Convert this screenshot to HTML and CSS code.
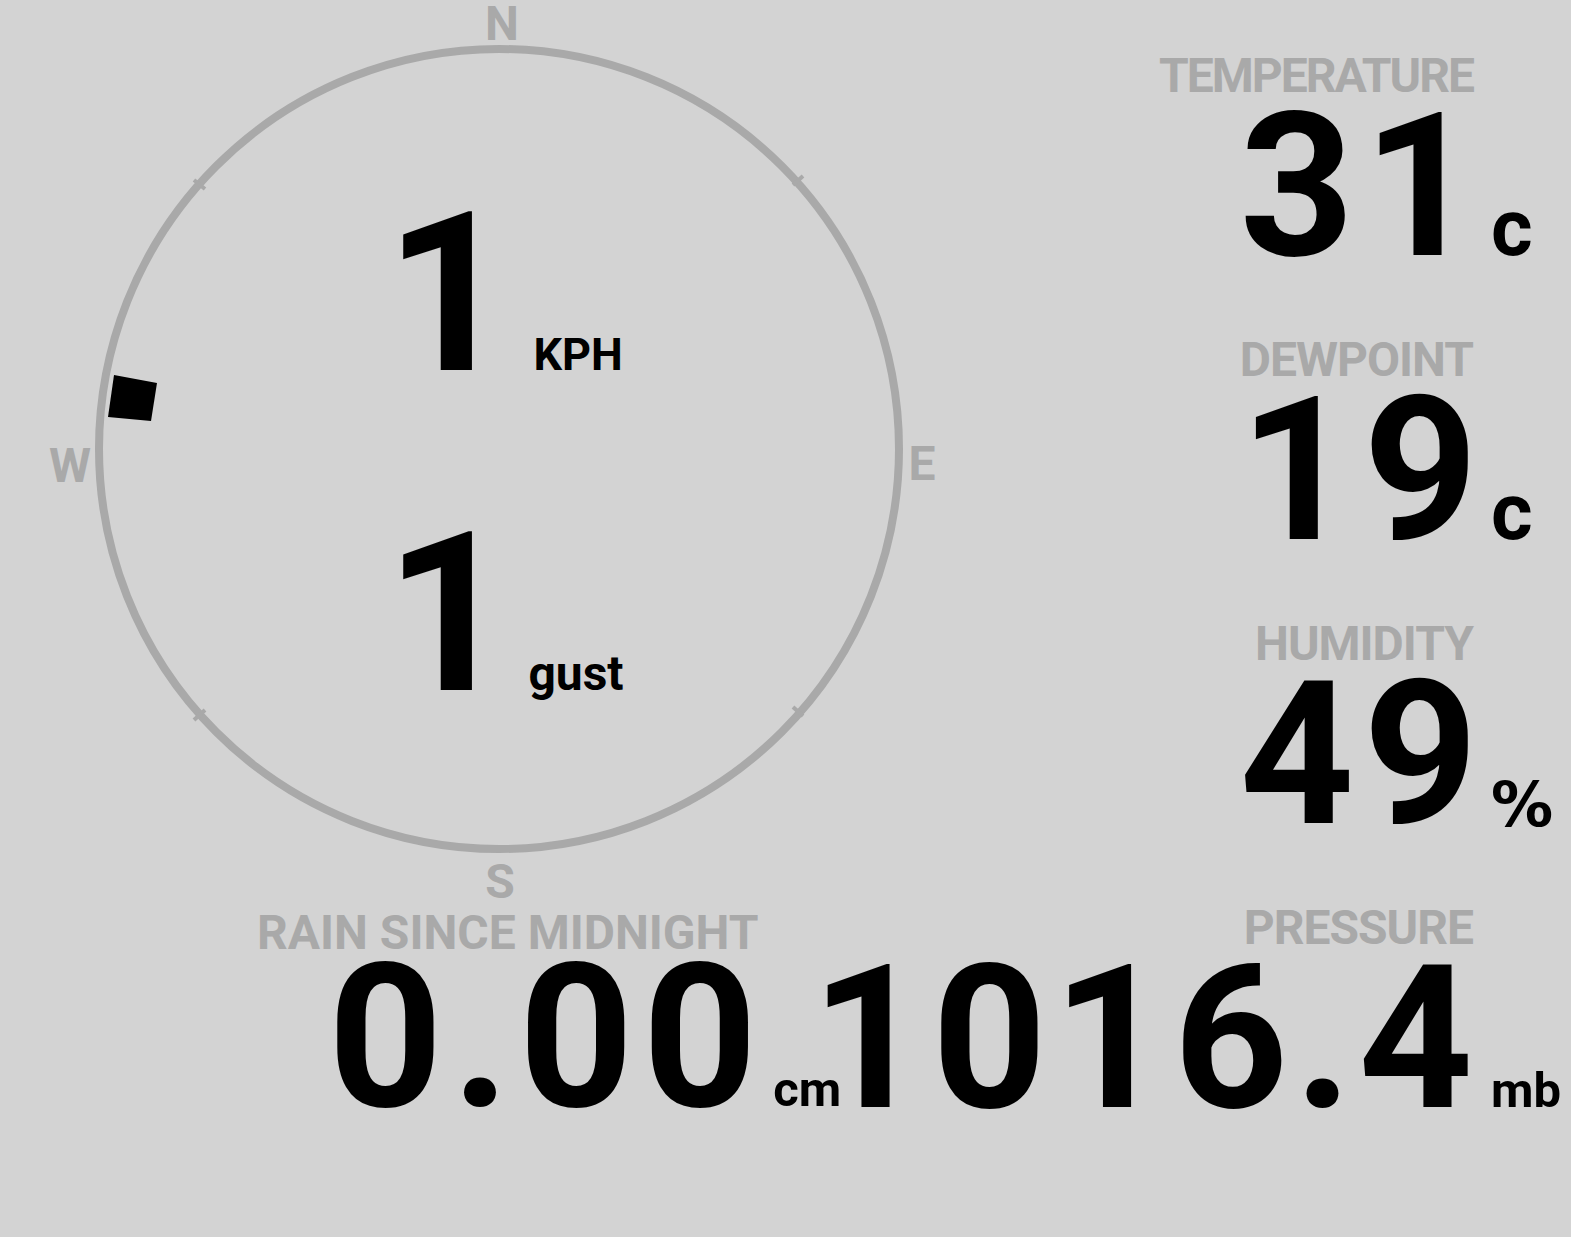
FILE: index.html
```html
<!DOCTYPE html>
<html>
<head>
  <meta charset="UTF-8">
  <title>Weather</title>
  <link rel="stylesheet" href="styles.css">
</head>
<body>
  <div class="board">
    <div class="left">
      <div class="compass">
        <svg class="dial" width="1000" height="903" viewBox="0 0 1000 903">
          <circle cx="499" cy="449" r="400" fill="none" stroke="#a9a9a9" stroke-width="8"/>
          <line x1="205" y1="189" x2="194" y2="180" stroke="#a9a9a9" stroke-width="4"/>
          <line x1="793" y1="185" x2="803" y2="176" stroke="#a9a9a9" stroke-width="4"/>
          <line x1="205" y1="710" x2="194" y2="720" stroke="#a9a9a9" stroke-width="4"/>
          <line x1="793" y1="707" x2="803" y2="716" stroke="#a9a9a9" stroke-width="4"/>
          <text class="cardinal" x="502" y="40" text-anchor="middle">N</text>
          <text class="cardinal" x="922" y="480" text-anchor="middle">E</text>
          <text class="cardinal" x="500" y="898" text-anchor="middle">S</text>
          <text class="cardinal" x="70" y="482" text-anchor="middle">W</text>
          <polygon points="114,375 157,383 151,421 108,417" fill="#000"/>
        </svg>
        <div class="speeds">
          <div class="speed"><span class="big">1</span><span class="speed-unit">KPH</span></div>
          <div class="speed"><span class="big">1</span><span class="speed-unit gust">gust</span></div>
        </div>
      </div>
      <div class="rain">
        <div class="label">RAIN SINCE MIDNIGHT</div>
        <div class="value-row"><span class="num">0.00</span><span class="unit sm">cm</span></div>
      </div>
    </div>

    <div class="readings">
      <div class="reading">
        <div class="label tight">TEMPERATURE</div>
        <div class="value-row"><span class="num">31</span><span class="unit">c</span></div>
      </div>
      <div class="reading">
        <div class="label">DEWPOINT</div>
        <div class="value-row"><span class="num">19</span><span class="unit">c</span></div>
      </div>
      <div class="reading">
        <div class="label">HUMIDITY</div>
        <div class="value-row"><span class="num">49</span><span class="unit pct">%</span></div>
      </div>
      <div class="reading pressure">
        <div class="label">PRESSURE</div>
        <div class="value-row"><span class="num">1016.4</span><span class="unit sm">mb</span></div>
      </div>
    </div>
  </div>
</body>
</html>
```
FILE: styles.css
```css
body { margin: 0; background: #d3d3d3; font-family: Roboto, "DejaVu Sans", sans-serif; font-weight: 700; color: #000; }
.board { display: flex; width: 1571px; height: 1237px; overflow: hidden; }

.left { width: 1000px; flex: none; }
.compass { position: relative; height: 903px; }
.dial { position: absolute; left: 0; top: 0; }
.cardinal { font-family: Roboto, sans-serif; font-weight: 700; font-size: 48px; fill: #a9a9a9; }
.speeds { position: relative; padding-top: 183px; padding-left: 385px; }
.speed { display: flex; align-items: baseline; height: 222px; line-height: 222px; }
.speed + .speed { margin-top: 98px; }
.speed .big { font-size: 222px; }
.speed-unit { font-size: 45px; line-height: 1; margin-left: 21px; }
.speed-unit.gust { font-size: 48px; margin-left: 16px; }

.label { font-size: 48px; line-height: 60px; color: #a9a9a9; letter-spacing: -1px; }
.label.tight { letter-spacing: -2px; }
.value-row { display: flex; align-items: baseline; line-height: 150px; }
.num { font-size: 200px; letter-spacing: 9px; }
.unit { font-size: 80px; line-height: 1; flex: none; }
.unit.sm { font-size: 49px; }
.unit.pct { font-family: "DejaVu Sans", sans-serif; font-size: 62px; position: relative; top: 3px; }

.rain .label { margin-left: 257px; letter-spacing: 0; }
.rain .value-row { padding-left: 328px; }
.rain .unit { padding-left: 7px; }

.readings { flex: 1; padding-top: 46px; min-width: 0; }
.reading { height: 284px; }
.reading .label { text-align: right; padding-right: 98px; }
.reading .value-row { justify-content: flex-end; margin-top: 6px; }
.reading .num { margin-right: -14px; }
.reading.pressure .num { letter-spacing: 6px; margin-right: -6px; }
.reading .unit { width: 98px; box-sizing: border-box; padding-left: 18px; }
```
